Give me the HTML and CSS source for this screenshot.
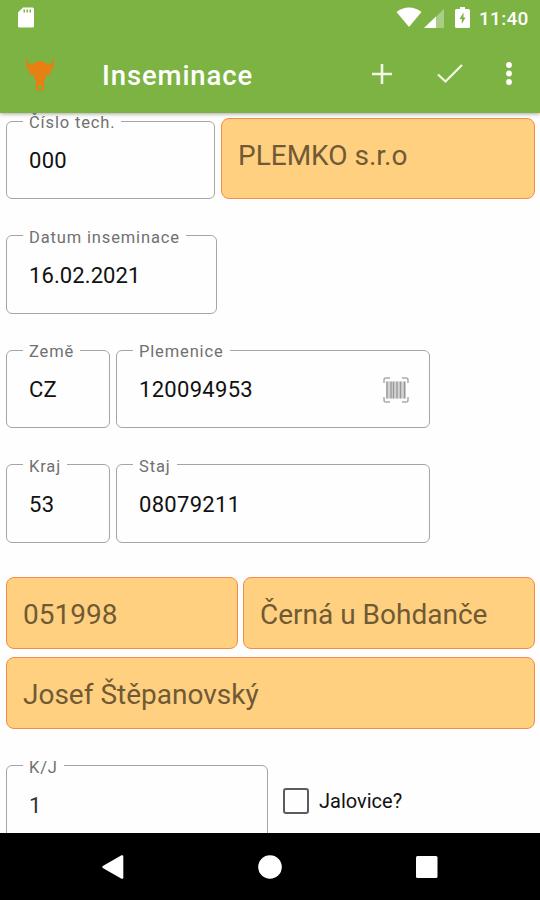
FILE: index.html
```html
<!DOCTYPE html>
<html lang="cs">
<head>
    <meta charset="UTF-8">
    <meta name="viewport" content="width=device-width, initial-scale=1.0">
    <title>Inseminace</title>
    <link rel="stylesheet" href="styles.css">
</head>
<body>
    <header class="header">
        <div class="status-bar">
            <svg class="sd-card" width="18" height="21" viewBox="0 0 18 21">
                <path fill="#fff" fill-rule="evenodd" d="M6 0.500H15.500Q17 0.500 17 2V19Q17 20.500 15.500 20.500H2.500Q1 20.500 1 19V5.500ZM6.500 2.500V5.500H8V2.500ZM9.500 2.500V5.500H11V2.500ZM12.500 2.500V5.500H14V2.500Z"/>
            </svg>
            <svg class="wifi" width="26" height="20" viewBox="0 0 26 20">
                <path fill="#fff" d="M0.500 5Q6 0.500 13 0.500T25.500 5L13 20Z"/>
            </svg>
            <svg class="signal" width="20" height="19" viewBox="0 0 20 19">
                <path fill="#fff" fill-opacity="0.35" d="M20 0V19H0Z"/>
                <path fill="#fff" d="M12 7.600V19H0Z"/>
            </svg>
            <svg class="battery" width="15" height="21" viewBox="0 0 15 21">
                <path fill="#fff" fill-rule="evenodd" d="M5 0H10V2H13.500Q15 2 15 3.500V19.500Q15 21 13.500 21H1.500Q0 21 0 19.500V3.500Q0 2 1.500 2H5ZM8.500 5.500L4.500 12H6.800V17L10.500 10.500H8.500Z"/>
            </svg>
            <span class="clock">11:40</span>
        </div>
        <div class="app-bar">
            <svg class="logo" width="30" height="34" viewBox="0 0 30 34">
                <path fill="#e97f10" fill-rule="evenodd" d="M2.500 0.500L2.800 5Q5 7.500 8 6Q11 3.200 15 3Q19 3.200 22 6Q25 7.500 27.200 5L27.500 0.500Q30 5 28.500 8.500Q27 11 24.500 11.500L27 12.500Q26.500 16 23 16.500L21 18Q20.500 21 18.800 23.500L19.500 29Q20 32.800 15 32.800Q9.500 32.800 10.500 29L11.200 23.500Q9.500 21 9 18L7 16.500Q3.500 16 3 12.500L5.500 11.500Q3 11 1.500 8.500Q0 5 2.500 0.500ZM8.500 13.800L12.500 16V14.800ZM21.500 13.800L17.500 16V14.800ZM12.500 28.500L13.500 31H16.500L17.500 28.500L16 27H14Z"/>
            </svg>
            <h1>Inseminace</h1>
            <div class="actions">
                <svg width="20" height="20" viewBox="0 0 20 20">
                    <path stroke="#f0f7e7" stroke-width="2.600" d="M10 0V20M0 10H20"/>
                </svg>
                <svg width="26" height="20" viewBox="0 0 26 20">
                    <path fill="none" stroke="#f0f7e7" stroke-width="2.300" d="M1 10.500L8.500 17.500L25 1"/>
                </svg>
                <svg width="6" height="24" viewBox="0 0 6 24">
                    <g fill="#fff">
                        <circle cx="3" cy="3" r="2.900"/>
                        <circle cx="3" cy="11.500" r="2.900"/>
                        <circle cx="3" cy="20" r="2.900"/>
                    </g>
                </svg>
            </div>
        </div>
    </header>

    <main class="form">
        <div class="row row-tech">
            <fieldset class="field w-tech">
                <legend>Číslo tech.</legend>
                <span>000</span>
            </fieldset>
            <div class="info info-tall">PLEMKO s.r.o</div>
        </div>
        <div class="row">
            <fieldset class="field w-date">
                <legend>Datum inseminace</legend>
                <span>16.02.2021</span>
            </fieldset>
        </div>
        <div class="row">
            <fieldset class="field w-small">
                <legend>Země</legend>
                <span>CZ</span>
            </fieldset>
            <fieldset class="field w-large">
                <legend>Plemenice</legend>
                <span>120094953</span>
                <svg class="barcode" width="26" height="26" viewBox="0 0 26 26">
                    <path fill="none" stroke="#aaa" stroke-width="1.500" d="M1 6V3Q1 1 3 1H7M19 1H23Q25 1 25 3V6M25 20V23Q25 25 23 25H19M7 25H3Q1 25 1 23V20"/>
                    <path fill="#d2d2d2" d="M3 4.500H23V21.500H3Z"/>
                    <path stroke="#989898" stroke-width="1.300" d="M4 4.500V21.500M8 4.500V21.500M10.500 4.500V21.500M14 4.500V21.500M17.500 4.500V21.500M21.500 4.500V21.500"/>
                </svg>
            </fieldset>
        </div>
        <div class="row">
            <fieldset class="field w-small">
                <legend>Kraj</legend>
                <span>53</span>
            </fieldset>
            <fieldset class="field w-large">
                <legend>Staj</legend>
                <span>08079211</span>
            </fieldset>
        </div>
        <div class="farm">
            <div class="info">051998</div>
            <div class="info">Černá u Bohdanče</div>
            <div class="info farm-owner">Josef Štěpanovský</div>
        </div>
        <div class="row">
            <fieldset class="field w-kj">
                <legend>K/J</legend>
                <span class="kj-value">1</span>
            </fieldset>
            <label class="check">
                <input type="checkbox">
                <span>Jalovice?</span>
            </label>
        </div>
    </main>

    <nav class="nav-bar">
        <svg width="22" height="24" viewBox="0 0 22 24">
            <path fill="#fff" d="M0.800 11Q-0.200 12 0.800 13L19.500 23.700Q21.300 24.300 21.300 22.500V1.500Q21.300 -0.300 19.500 0.300Z"/>
        </svg>
        <svg width="24" height="24" viewBox="0 0 24 24">
            <circle cx="12" cy="12" r="11.800" fill="#fff"/>
        </svg>
        <svg width="22" height="22" viewBox="0 0 22 22">
            <rect width="21.500" height="22" rx="1.500" fill="#fff"/>
        </svg>
    </nav>
</body>
</html>
```

FILE: styles.css
```css
* {
    box-sizing: border-box;
}

body {
    margin: 0;
    width: 540px;
    height: 900px;
    display: flex;
    flex-direction: column;
    overflow: hidden;
    background-color: #fefefe;
    color: #111;
    font-family: Roboto, "Liberation Sans", sans-serif;
}

svg {
    display: block;
    flex: none;
}

/* Header */
.header {
    position: relative;
    z-index: 1;
    flex: none;
    height: 113px;
    background-color: #7cb342;
    color: #ffffff;
    box-shadow: 0 1px 4px rgba(0, 0, 0, 0.35);
}

.status-bar {
    display: flex;
    align-items: center;
    height: 36px;
    padding: 0 11px 0 17px;
}

.sd-card {
    margin-right: auto;
    margin-top: -2px;
}

.wifi {
    margin-top: -2px;
    margin-right: 2px;
}

.signal {
    margin-right: 11px;
}

.battery {
    margin-top: -2px;
    margin-right: 9px;
}

.clock {
    width: 50px;
    font-size: 19px;
    font-weight: 500;
    letter-spacing: 0.3px;
    white-space: nowrap;
}

.app-bar {
    display: flex;
    align-items: center;
    height: 77px;
    padding: 0 28px 0 25px;
}

.logo {
    margin-right: 47px;
}

h1 {
    margin: 2px 0 0;
    font-size: 27.500px;
    font-weight: 500;
    letter-spacing: 0.900px;
}

.actions {
    display: flex;
    align-items: center;
    gap: 45px;
    margin-left: auto;
}

.actions svg {
    margin-top: -2px;
}

.actions svg:last-child {
    margin-left: -2px;
}

/* Form */
.form {
    flex: 1;
    min-height: 0;
    overflow: hidden;
    padding: 0 5px 0 6px;
}

.row {
    display: flex;
    gap: 6px;
    height: 87px;
    margin-bottom: 27.600px;
}

.row-tech {
    margin-top: -1px;
}

.field {
    min-width: 0;
    margin: 0;
    padding: 0 20px 7px 16px;
    border: 1px solid #a5a5a5;
    border-radius: 6px;
    display: flex;
    align-items: center;
    justify-content: space-between;
    font-size: 22px;
    letter-spacing: 0.3px;
}

.field legend {
    height: 18px;
    padding: 0 6px;
    color: #707070;
    font-size: 16.500px;
    line-height: 22px;
    letter-spacing: 0.850px;
}

.w-tech {
    width: 209px;
}

.w-date {
    width: 211px;
}

.w-date span {
    letter-spacing: 0.1px;
}

.w-small {
    width: 104px;
}

.w-large {
    width: 314px;
}

.w-kj {
    width: 262px;
}

.field span {
    margin-left: 6px;
}

.kj-value {
    color: #333;
}

.info {
    flex: 1;
    height: 72px;
    padding: 0 16px;
    border: 1.500px solid #f58a4a;
    border-radius: 8px;
    background-color: #ffd080;
    color: #705a35;
    font-size: 28px;
    line-height: 73px;
    white-space: nowrap;
}

.info-tall {
    height: 81px;
    margin-top: 6px;
    line-height: 74px;
}

.farm {
    display: grid;
    grid-template-columns: 232px 1fr;
    gap: 8px 5px;
    margin: 34px 0 28px;
}

.farm-owner {
    grid-column: 1 / -1;
}

.check {
    display: flex;
    align-items: center;
    gap: 10px;
    margin: 4px 0 0 9px;
    height: 81px;
    font-size: 20px;
}

.check input {
    appearance: none;
    width: 26px;
    height: 26px;
    margin: 0;
    border: 2px solid #5c5c5c;
    border-radius: 3px;
}

/* Android navigation */
.nav-bar {
    flex: none;
    display: flex;
    align-items: center;
    justify-content: space-between;
    height: 67px;
    padding: 0 102px 0 102px;
    background-color: #000;
}
```
